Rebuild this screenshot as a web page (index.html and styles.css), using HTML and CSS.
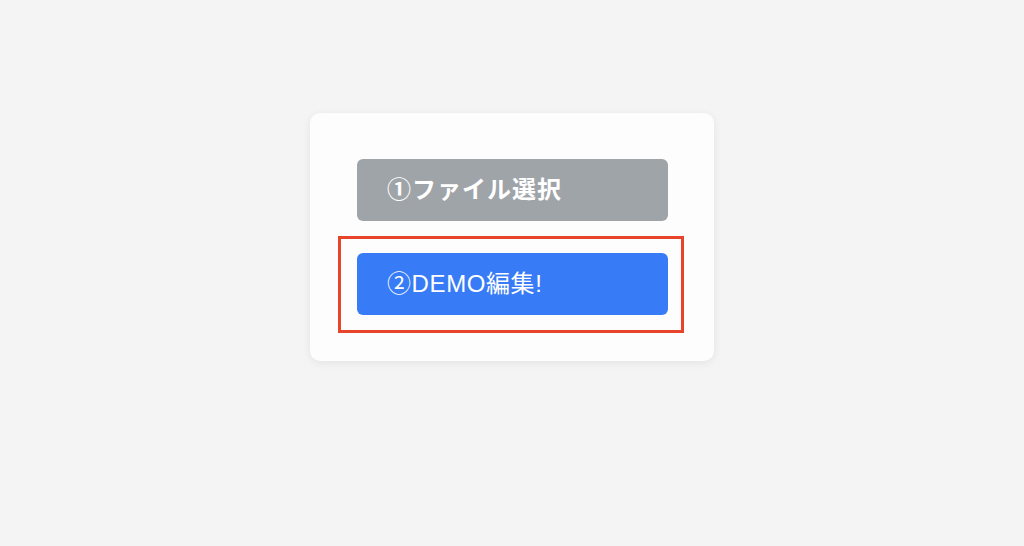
FILE: index.html
```html
<!DOCTYPE html>
<html lang="ja">
<head>
<meta charset="utf-8">
<title>DEMO</title>
<link rel="stylesheet" href="styles.css">
</head>
<body>
<main class="page">
  <div class="card">
    <button class="btn btn-gray" type="button">①ファイル選択</button>
    <div class="highlight-wrap">
      <button class="btn btn-blue" type="button">②DEMO編集!</button>
      <span class="highlight"></span>
    </div>
  </div>
</main>
</body>
</html>
```
FILE: styles.css
```css
html, body {
  margin: 0;
  padding: 0;
  background: #f4f4f4;
  font-family: "Liberation Sans", "Noto Sans CJK JP", sans-serif;
}
.page {
  display: flex;
  flex-direction: column;
  align-items: center;
  padding-top: 113px;
  min-height: 546px;
  box-sizing: border-box;
}
.card {
  width: 404px;
  box-sizing: border-box;
  padding: 46px 46px 46px 47px;
  background: #fdfdfd;
  border-radius: 10px;
  box-shadow: 0 2px 8px rgba(0, 0, 0, 0.07);
  display: flex;
  flex-direction: column;
  gap: 32px;
}
.btn {
  display: flex;
  align-items: center;
  width: 311px;
  height: 62px;
  box-sizing: border-box;
  padding: 0 0 0 30px;
  border: none;
  border-radius: 6px;
  color: #ffffff;
  font-family: "Liberation Sans", "Noto Sans CJK JP", sans-serif;
  font-size: 24px;
  line-height: 1;
  text-align: left;
}
.btn-gray {
  background: #9fa4a8;
  font-weight: 700;
  letter-spacing: 1px;
}
.btn-blue {
  background: #377bf6;
  font-weight: 400;
  letter-spacing: 0.6px;
}
.highlight-wrap {
  position: relative;
}
.highlight {
  position: absolute;
  left: -19px;
  top: -17px;
  right: -16px;
  bottom: -18px;
  border: 3px solid #e8432b;
  pointer-events: none;
}
```
